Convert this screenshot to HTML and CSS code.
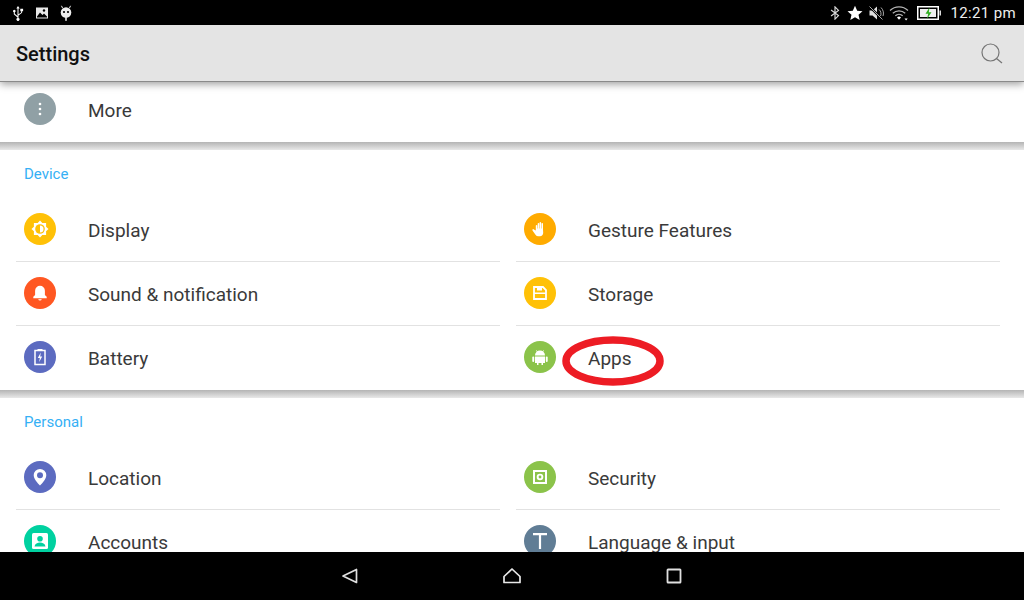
FILE: index.html
```html
<!DOCTYPE html>
<html lang="en">
<head>
<meta charset="utf-8">
<title>Settings</title>
<link rel="stylesheet" href="styles.css">
</head>
<body>
<div class="screen">
  <header class="status">
    <div class="status-left">
      <svg class="si" viewBox="0 0 16 16"><path d="M8 1 6.300 3.600h1.200V11L4.800 8.800V7.200a1.200 1.200 0 1 0-1 0V9.200L7.500 12.400v.6a1.500 1.500 0 1 0 1 0v-2.600l3.600-2.600V6.200h1V3.800h-2.800v2.400h.9v1.400L8.500 9.200V3.600h1.200z" fill="#fff"/></svg>
      <svg class="si" viewBox="0 0 16 16"><rect x="2" y="2.500" width="12" height="11" fill="#e8e8e8"/><path d="M3 11.500 6 7.500l2.500 2.500 1.500-1.500 3 3v1H3z" fill="#000"/><circle cx="10" cy="5.500" r="1.200" fill="#000"/></svg>
      <svg class="si" viewBox="0 0 16 16"><circle cx="8" cy="7.500" r="5.300" fill="#eee"/><rect x="7.200" y="12" width="1.600" height="3.800" fill="#eee"/><path d="M4.500 3 3.500 .8M11.500 3l1-2.200" stroke="#eee"/><circle cx="6" cy="7" r="1.100" fill="#000"/><circle cx="10" cy="7" r="1.100" fill="#000"/></svg>
    </div>
    <div class="status-right">
      <svg class="si bt" viewBox="0 0 16 16"><path d="M3.500 4.500 12 11 8 15V1l4 4L3.500 11.500" fill="none" stroke="#ddd" stroke-width="1.300"/></svg>
      <svg class="si star" viewBox="0 0 16 16"><path d="M8 .8l2.200 4.900 5.300.5-4 3.600 1.200 5.200L8 12.300 3.300 15l1.200-5.200-4-3.600 5.300-.5z" fill="#fff"/></svg>
      <svg class="si mute" viewBox="0 0 16 16"><path d="M1.500 5.500h3L9 1.500v13l-4.500-4h-3z" fill="#ddd"/><path d="M1.500 1.500l13 13" stroke="#000" stroke-width="2.400"/><path d="M1.500 1.500l13 13M11 4.500c2 1.500 2.500 4.500 1.500 6.500M13 2.500c2.500 2.500 3 6 2 8.500" stroke="#bbb" stroke-width=".9" fill="none"/></svg>
      <svg class="si wifi" viewBox="0 0 20 16"><path d="M1 5.500a13 13 0 0 1 18 0M3.800 8.300a9 9 0 0 1 12.400 0M6.300 10.800a5.500 5.500 0 0 1 7.400 0" fill="none" stroke="#b5b5b5" stroke-width="1.200"/><path d="M8 12.500a3 3 0 0 1 4 0L10 14.800z" fill="#fff"/><path d="M15.500 13.500h3.200l-1.600 2z" fill="#fff"/></svg>
      <svg class="battery" viewBox="0 0 24 14"><rect x=".75" y=".75" width="20.500" height="12.500" fill="#000" stroke="#fff" stroke-width="1.500"/><rect x="3" y="3" width="16" height="8" fill="#f0f0f0"/><rect x="22.500" y="4.500" width="1.500" height="5" fill="#ddd"/><path d="M12.500 1.500 8.500 7.800h2.700L10 13l4.500-6.700h-2.700z" fill="#2fae1f"/></svg>
      <span class="time">12:21 pm</span>
    </div>
  </header>

  <div class="toolbar">
    <h1 class="title">Settings</h1>
    <svg class="search" viewBox="0 0 24 24"><circle cx="10.500" cy="10.500" r="8.500" fill="none" stroke="#757575" stroke-width="1.200"/><path d="M16.500 16.500 22 21" stroke="#757575" stroke-width="1.200"/></svg>
  </div>

  <main class="content">
    <section class="card card-first">
      <div class="grid">
        <div class="item last">
          <span class="ic ic-grey"><svg viewBox="0 0 32 32"><circle cx="16" cy="11" r="1.300" fill="#fff"/><circle cx="16" cy="16" r="1.300" fill="#fff"/><circle cx="16" cy="21" r="1.300" fill="#fff"/></svg></span>
          <span class="label">More</span>
        </div>
      </div>
    </section>
    <div class="rule"></div>

    <section class="card">
      <h2 class="head">Device</h2>
      <div class="grid">
        <div class="item">
          <span class="ic ic-amber"><svg viewBox="0 0 32 32"><path d="M16 7.500l2.300 2.400h3.800v3.800l2.400 2.300-2.400 2.300v3.800h-3.800L16 24.500l-2.300-2.400H9.900v-3.800L7.500 16l2.400-2.300V9.900h3.800z" fill="#fff"/><circle cx="16" cy="16" r="4.800" fill="#ffc107"/><path d="M16 12.500a3.500 3.500 0 0 1 0 7z" fill="#fff"/></svg></span>
          <span class="label">Display</span>
        </div>
        <div class="item">
          <span class="ic ic-orange"><svg viewBox="0 0 32 32"><path d="M11.800 17.500V12.500a.8.800 0 0 1 1.500 0V15.500h.4V10.500a.8.800 0 0 1 1.500 0V15.500h.4V9.500a.8.800 0 0 1 1.500 0V15.500h.4V10.500a.8.800 0 0 1 1.500 0V16.500l.2 3.500a3.500 3.500 0 0 1-3.200 3.200h-1.500a3.500 3.500 0 0 1-3-1.500l-3-4.200a.9.900 0 0 1 1.400-1.100z" fill="#fff"/></svg></span>
          <span class="label">Gesture Features</span>
        </div>
        <div class="item">
          <span class="ic ic-red"><svg viewBox="0 0 32 32"><path d="M14.200 22.300a1.900 1.900 0 0 0 3.600 0z" fill="#fff"/><path d="M9.300 21.200v-1.400l1.800-1.800v-4.300a4.900 4.900 0 0 1 9.800 0V18l1.800 1.800v1.400z" fill="#fff"/></svg></span>
          <span class="label">Sound &amp; notification</span>
        </div>
        <div class="item">
          <span class="ic ic-amber"><svg viewBox="0 0 32 32"><path d="M10 10h9l3 3v9H10z" fill="none" stroke="#fff" stroke-width="1.800"/><rect x="13" y="10" width="5" height="3.500" fill="#fff"/><rect x="10" y="15.500" width="12" height="1.500" fill="#fff"/></svg></span>
          <span class="label">Storage</span>
        </div>
        <div class="item last">
          <span class="ic ic-indigo"><svg viewBox="0 0 32 32"><rect x="11" y="9.500" width="10" height="14" fill="none" stroke="#fff" stroke-width="1.500"/><rect x="13.500" y="8" width="5" height="2" fill="#fff"/><path d="M16.800 11.500 13.800 17h2l-.6 4 3-5.500h-2z" fill="#fff"/></svg></span>
          <span class="label">Battery</span>
        </div>
        <div class="item last">
          <span class="ic ic-green"><svg viewBox="0 0 32 32"><path d="M11 14.500a5 5 0 0 1 10 0z" fill="#fff"/><path d="M12.500 9.500l1 1.500M19.500 9.500l-1 1.500" stroke="#fff"/><path d="M11 15.500h10v6.500h-2v2h-1.500v-2h-3v2H13v-2h-2z" fill="#fff"/><rect x="8.300" y="15.500" width="1.900" height="5.500" rx=".9" fill="#fff"/><rect x="21.800" y="15.500" width="1.900" height="5.500" rx=".9" fill="#fff"/></svg></span>
          <span class="label">Apps</span>
        </div>
      </div>
    </section>
    <div class="rule"></div>

    <section class="card">
      <h2 class="head">Personal</h2>
      <div class="grid">
        <div class="item">
          <span class="ic ic-indigo"><svg viewBox="0 0 32 32"><path d="M16 8a6.300 6.300 0 0 0-6.300 6.300C9.700 19 16 24.500 16 24.500s6.300-5.500 6.300-10.200A6.300 6.300 0 0 0 16 8z" fill="#fff"/><circle cx="16" cy="14.300" r="3" fill="#5c6bc0"/></svg></span>
          <span class="label">Location</span>
        </div>
        <div class="item">
          <span class="ic ic-green"><svg viewBox="0 0 32 32"><path d="M9 9h14v14H9z" fill="#fff"/><rect x="11" y="11" width="10" height="10" fill="#8bc34a"/><circle cx="16" cy="16" r="3.300" fill="#fff"/><circle cx="16" cy="16" r="1.400" fill="#8bc34a"/></svg></span>
          <span class="label">Security</span>
        </div>
        <div class="item">
          <span class="ic ic-teal"><svg viewBox="0 0 32 32"><rect x="8" y="8" width="16" height="16" rx="1.500" fill="#fff"/><circle cx="16" cy="13.800" r="2.800" fill="#00d1a0"/><path d="M10.500 21.500c.5-3 3-4 5.500-4s5 1 5.500 4z" fill="#00d1a0"/></svg></span>
          <span class="label">Accounts</span>
        </div>
        <div class="item">
          <span class="ic ic-slate"><svg viewBox="0 0 32 32"><path d="M9 8h14v2.200h-5.900V24h-2.200V10.200H9z" fill="#fff"/></svg></span>
          <span class="label">Language &amp; input</span>
        </div>
      </div>
    </section>

    <svg class="mark" viewBox="0 0 106 54"><ellipse cx="53" cy="27" rx="47" ry="21" fill="none" stroke="#ed1c24" stroke-width="7.500"/></svg>
  </main>

  <nav class="navbar">
    <svg class="nav-ic" viewBox="0 0 20 20"><path d="M16.500 3.500v13L3 10z" fill="none" stroke="#e0e0e0" stroke-width="1.700" stroke-linejoin="round"/></svg>
    <svg class="nav-ic" viewBox="0 0 20 20"><path d="M2 16.500v-6L10 3l8 7.500v6z" fill="none" stroke="#e8e8e8" stroke-width="1.700" stroke-linejoin="round"/></svg>
    <svg class="nav-ic" viewBox="0 0 20 20"><rect x="3.500" y="3.500" width="13" height="13" rx=".6" fill="none" stroke="#e0e0e0" stroke-width="1.800"/></svg>
  </nav>
</div>
</body>
</html>
```

FILE: styles.css
```css
* { box-sizing: border-box; }
html, body { margin: 0; padding: 0; background: #000; }
.screen {
  width: 1024px;
  height: 600px;
  display: flex;
  flex-direction: column;
  overflow: hidden;
  font-family: Roboto, "Liberation Sans", sans-serif;
}
.status {
  height: 25px;
  flex: none;
  background: #000;
  display: flex;
  justify-content: space-between;
  align-items: center;
  padding: 0 8px 0 10px;
}
.status-left { display: flex; gap: 8px; }
.status-right { display: flex; align-items: center; }
.si { width: 16px; height: 16px; display: block; }
.bt { width: 14px; height: 14px; margin-right: 5px; }
.star { margin-right: 5px; }
.mute { margin-right: 5px; }
.wifi { width: 20px; margin-right: 8px; }
.battery { width: 24px; height: 14px; margin-right: 10px; }
.time { color: #eee; font-size: 15px; letter-spacing: .35px; }

.toolbar {
  height: 57px;
  flex: none;
  background: #e4e4e4;
  border-bottom: 1px solid #8a8a8a;
  display: flex;
  align-items: center;
  justify-content: space-between;
  padding: 2px 20px 0 16px;
  position: relative;
  z-index: 2;
  box-shadow: 0 2px 8px rgba(0, 0, 0, .4);
}
.title { margin: 0; font-size: 20px; font-weight: 500; color: #111; }
.search { width: 24px; height: 24px; }

.content {
  flex: 1;
  min-height: 0;
  overflow: hidden;
  position: relative;
  background: #fff;
  display: flex;
  flex-direction: column;
}
.card { background: #fff; flex: none; }
.card-first { margin-top: -4px; }
.rule {
  height: 8px;
  flex: none;
  background: linear-gradient(#b4b4b4, #e8e8e8);
}
.head {
  margin: 0;
  height: 48px;
  padding: 15px 0 0 24px;
  font-size: 15px;
  font-weight: 400;
  line-height: 18px;
  color: #35b0f5;
}
.grid {
  display: grid;
  grid-template-columns: 484px 484px;
  column-gap: 16px;
  padding: 0 16px;
}
.item {
  height: 64px;
  display: flex;
  align-items: center;
  gap: 32px;
  padding-left: 8px;
  box-shadow: inset 0 -1px #e2e2e2;
}
.item.last { box-shadow: none; }
.ic { width: 32px; height: 32px; margin-top: -2px; border-radius: 50%; flex: none; display: block; }
.ic svg { display: block; width: 32px; height: 32px; }
.ic-grey { background: #90a0a5; }
.ic-amber { background: #ffc107; }
.ic-orange { background: #ffab00; }
.ic-red { background: #ff5722; }
.ic-indigo { background: #5c6bc0; }
.ic-green { background: #8bc34a; }
.ic-teal { background: #00d1a0; }
.ic-slate { background: #607d95; }
.label { font-size: 19px; color: #3a3a3a; }

.mark {
  position: absolute;
  left: 560px;
  top: 252px;
  width: 106px;
  height: 54px;
}

.navbar {
  height: 48px;
  flex: none;
  background: #000;
  display: flex;
  justify-content: center;
  align-items: center;
  gap: 142px;
  position: relative;
  z-index: 2;
}
.nav-ic { width: 20px; height: 20px; display: block; }
```
